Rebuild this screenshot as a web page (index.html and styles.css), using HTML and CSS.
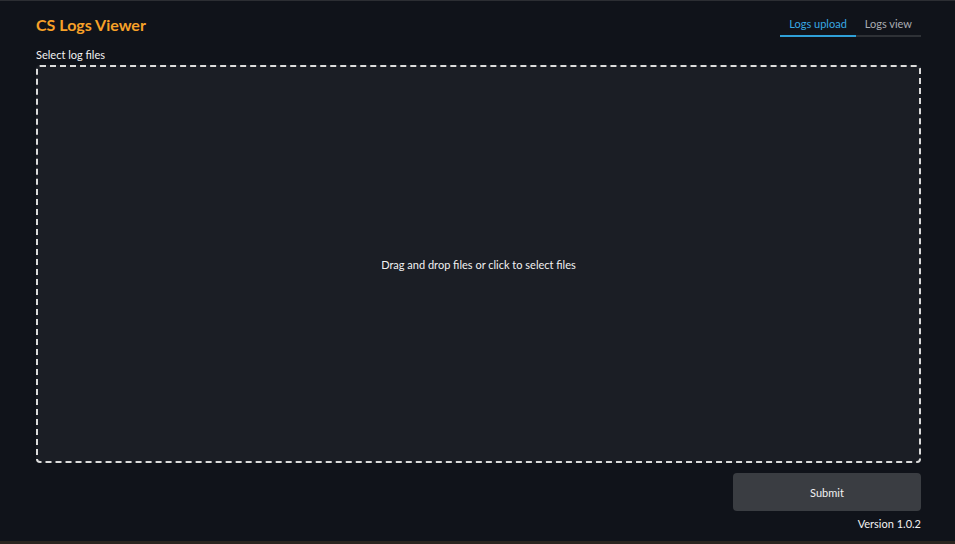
FILE: index.html
```html
<!DOCTYPE html>
<html lang="en">
<head>
    <meta charset="UTF-8">
    <meta name="viewport" content="width=device-width, initial-scale=1.0">
    <title>CS Logs Viewer</title>
    <link rel="stylesheet" href="styles.css">
</head>
<body>

    <div class="app">
        <header class="header">
            <h1 class="title">CS Logs Viewer</h1>
            <nav class="tabs">
                <div class="tab active">Logs upload</div>
                <div class="tab">Logs view</div>
            </nav>
        </header>

        <main class="content">
            <label class="label" for="files">Select log files</label>
            <div class="dropzone" id="dropzone">
                <input type="file" id="files" multiple hidden>
                <p>Drag and drop files or click to select files</p>
            </div>
            <div class="actions">
                <button class="submit">Submit</button>
            </div>
            <div class="version">Version 1.0.2</div>
        </main>
    </div>

</body>
</html>
```

FILE: styles.css
```css
html, body {
    margin: 0;
    padding: 0;
    height: 100%;
    background-color: #10131a;
    color: #f2f2f2;
    font-family: Lato, "Noto Sans", sans-serif;
    font-size: 11px;
}

.app {
    box-sizing: border-box;
    height: 100%;
    padding: 0 34px 0 36px;
    border-top: 1px solid #2c2e33;
    border-bottom: 3px solid #2a241f;
    display: flex;
    flex-direction: column;
}

.header {
    display: flex;
    justify-content: space-between;
    align-items: flex-start;
    height: 47px;
}

.title {
    margin: 14px 0 0;
    font-size: 16px;
    font-weight: 700;
    color: #f7a128;
}

.tabs {
    display: flex;
    margin-top: 10px;
    border-bottom: 2px solid #2e3136;
}

.tab {
    padding: 6px 9px 5px;
    color: #a9acb2;
    cursor: pointer;
}

.tab.active {
    color: #38a9e4;
    box-shadow: 0 2px 0 #2fa0d8;
}

.content {
    flex: 1;
    display: flex;
    flex-direction: column;
}

.label {
    display: block;
    margin-bottom: 4px;
}

.dropzone {
    height: 394px;
    border: 2px dashed #dcdcdc;
    border-radius: 4px;
    background-color: #1b1e25;
    display: flex;
    justify-content: center;
    align-items: center;
    cursor: pointer;
}

.dropzone p {
    margin: 0;
}

.actions {
    display: flex;
    justify-content: flex-end;
    margin-top: 10px;
}

.submit {
    width: 188px;
    height: 38px;
    border: none;
    border-radius: 4px;
    background-color: #3a3d42;
    color: #f2f2f2;
    font-family: inherit;
    font-size: 11px;
    cursor: pointer;
}

.version {
    margin-top: 6px;
    text-align: right;
}
```
